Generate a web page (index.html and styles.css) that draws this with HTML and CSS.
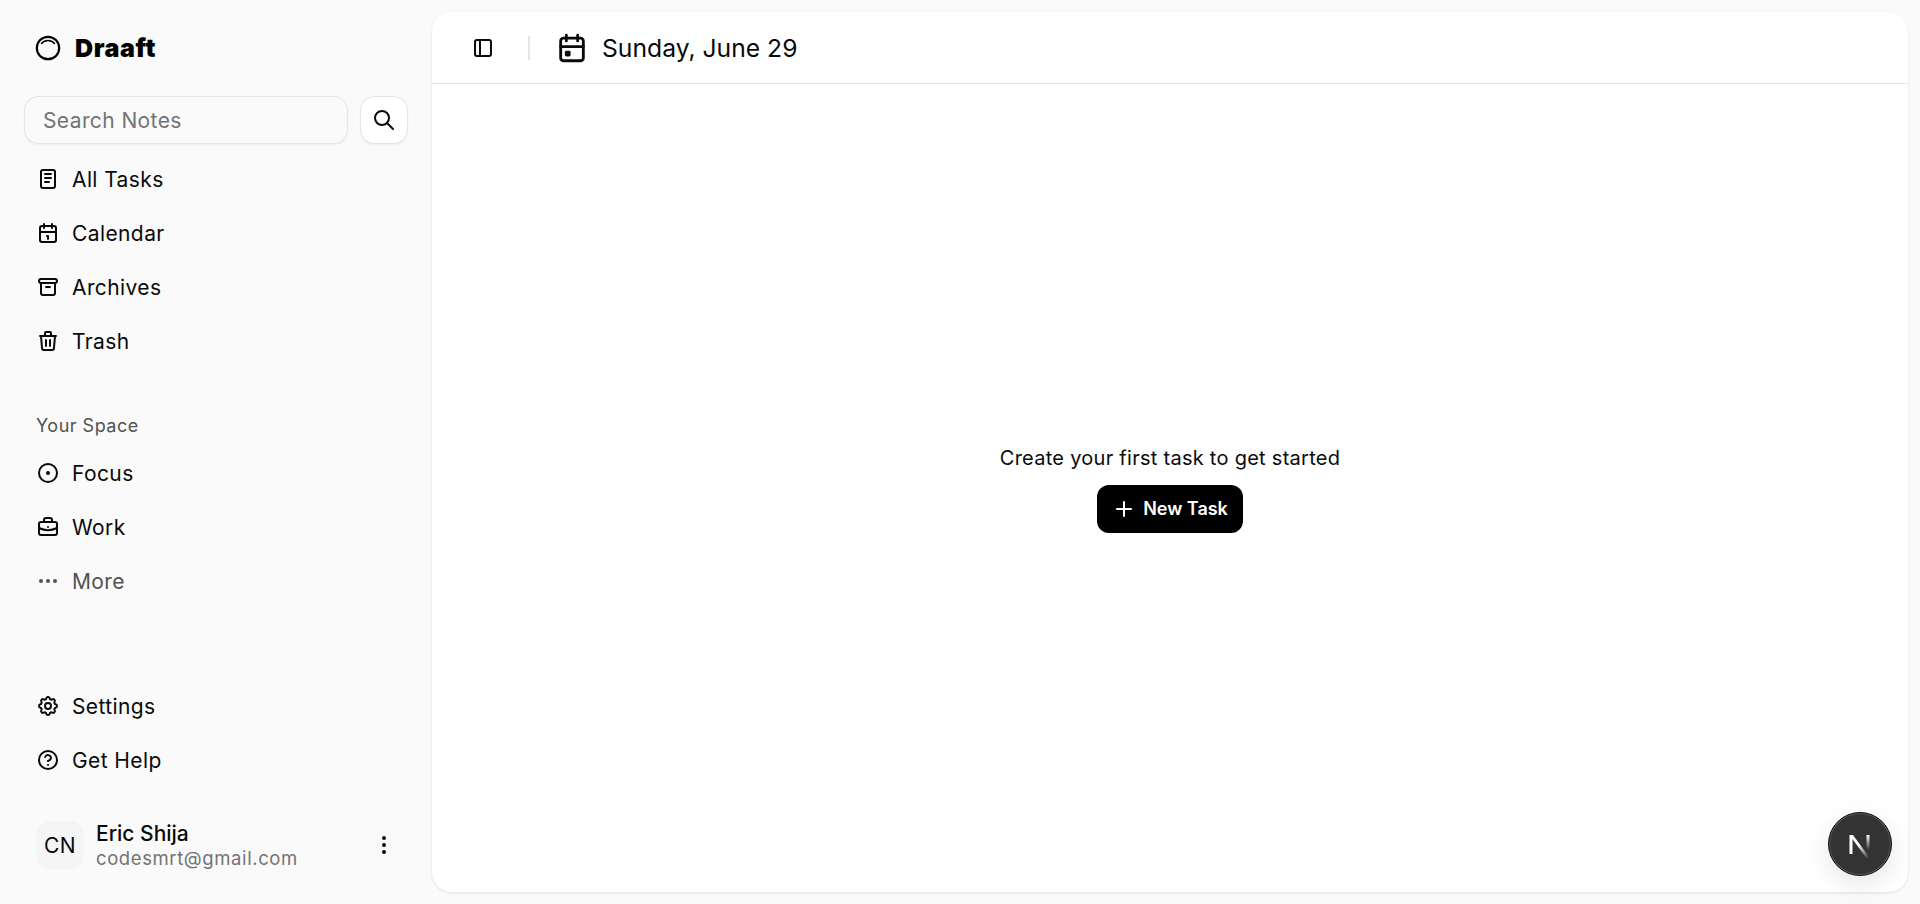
FILE: index.html
```html
<!DOCTYPE html>
<html>
<head>
    <title>Draaft</title>
    <link rel="stylesheet" href="styles.css">
</head>
<body>

    <aside class="sidebar">
        <div class="brand">
            <svg class="brand-logo" width="26" height="26" viewBox="0 0 26 26" fill="none" stroke="currentColor" stroke-linecap="round">
                <circle cx="13" cy="13" r="11.2" stroke-width="2.2"/>
                <path d="M6.5 8.5a8.5 8.5 0 0 1 13 0" stroke-width="1.5"/>
            </svg>
            <span class="brand-name">Draaft</span>
        </div>

        <div class="search">
            <input class="search-input" type="text" placeholder="Search Notes">
            <button class="search-button">
                <svg class="icon" viewBox="0 0 24 24"><circle cx="10" cy="10" r="7"/><path d="M21 21l-6-6"/></svg>
            </button>
        </div>

        <nav class="nav nav-top">
            <a class="nav-item">
                <svg class="icon" viewBox="0 0 24 24"><rect x="5" y="3" width="14" height="18" rx="2"/><path d="M9 7h6M9 11h6M9 15h4"/></svg>
                All Tasks
            </a>
            <a class="nav-item">
                <svg class="icon" viewBox="0 0 24 24"><rect x="4" y="5" width="16" height="16" rx="2"/><path d="M16 3v4M8 3v4M4 11h16M11 15h1v3"/></svg>
                Calendar
            </a>
            <a class="nav-item">
                <svg class="icon" viewBox="0 0 24 24"><rect x="3" y="4" width="18" height="4" rx="2"/><path d="M5 8v10a2 2 0 0 0 2 2h10a2 2 0 0 0 2-2V8M10 12h4"/></svg>
                Archives
            </a>
            <a class="nav-item">
                <svg class="icon" viewBox="0 0 24 24"><path d="M4 7h16M10 11v6M14 11v6M5 7l1 12a2 2 0 0 0 2 2h8a2 2 0 0 0 2-2l1-12M9 7V4a1 1 0 0 1 1-1h4a1 1 0 0 1 1 1v3"/></svg>
                Trash
            </a>
        </nav>

        <div class="nav-label">Your Space</div>

        <nav class="nav">
            <a class="nav-item">
                <svg class="icon" viewBox="0 0 24 24"><circle cx="12" cy="12" r="9"/><circle class="dot" cx="12" cy="12" r="1"/></svg>
                Focus
            </a>
            <a class="nav-item">
                <svg class="icon" viewBox="0 0 24 24"><rect x="3" y="7" width="18" height="13" rx="2"/><path d="M8 7V5a2 2 0 0 1 2-2h4a2 2 0 0 1 2 2v2M12 12v.01M3 13a20 20 0 0 0 18 0"/></svg>
                Work
            </a>
            <a class="nav-item muted">
                <svg class="icon" viewBox="0 0 24 24"><circle class="dot" cx="5" cy="12" r="1"/><circle class="dot" cx="12" cy="12" r="1"/><circle class="dot" cx="19" cy="12" r="1"/></svg>
                More
            </a>
        </nav>

        <nav class="nav nav-bottom">
            <a class="nav-item">
                <svg class="icon" viewBox="0 0 24 24"><path d="M10.325 4.317c.426-1.756 2.924-1.756 3.35 0a1.724 1.724 0 0 0 2.573 1.066c1.543-.94 3.31.826 2.37 2.37a1.724 1.724 0 0 0 1.065 2.572c1.756.426 1.756 2.924 0 3.35a1.724 1.724 0 0 0-1.066 2.573c.94 1.543-.826 3.31-2.37 2.37a1.724 1.724 0 0 0-2.572 1.065c-.426 1.756-2.924 1.756-3.35 0a1.724 1.724 0 0 0-2.573-1.066c-1.543.94-3.31-.826-2.37-2.37a1.724 1.724 0 0 0-1.065-2.572c-1.756-.426-1.756-2.924 0-3.35a1.724 1.724 0 0 0 1.066-2.573c-.94-1.543.826-3.31 2.37-2.37c1 .608 2.296.07 2.572-1.065z"/><circle cx="12" cy="12" r="3"/></svg>
                Settings
            </a>
            <a class="nav-item">
                <svg class="icon" viewBox="0 0 24 24"><circle cx="12" cy="12" r="9"/><path d="M9.1 9a3 3 0 0 1 5.8 1c0 2-3 3-3 3M12 17v.01"/></svg>
                Get Help
            </a>
        </nav>

        <div class="user">
            <div class="avatar">CN</div>
            <div class="user-info">
                <div class="user-name">Eric Shija</div>
                <div class="user-email">codesmrt@gmail.com</div>
            </div>
            <svg class="icon user-menu" viewBox="0 0 24 24"><circle class="dot" cx="12" cy="5" r="1"/><circle class="dot" cx="12" cy="12" r="1"/><circle class="dot" cx="12" cy="19" r="1"/></svg>
        </div>
    </aside>

    <main class="main">
        <header class="topbar">
            <svg class="icon toggle" viewBox="0 0 24 24"><rect x="4" y="4" width="16" height="16" rx="2"/><path d="M9 4v16"/></svg>
            <span class="divider"></span>
            <svg class="icon date-icon" viewBox="0 0 24 24"><rect x="4" y="5" width="16" height="16" rx="2"/><path d="M16 3v4M8 3v4M4 11h16"/><rect class="dot" x="8" y="15" width="2" height="2"/></svg>
            <span class="date">Sunday, June 29</span>
        </header>

        <section class="empty">
            <p class="empty-text">Create your first task to get started</p>
            <button class="new-task">
                <svg class="icon" viewBox="0 0 24 24"><path d="M12 5v14M5 12h14"/></svg>
                New Task
            </button>
        </section>

        <div class="dev-badge">
            <svg width="28" height="28" viewBox="0 0 28 28" fill="none">
                <defs>
                    <linearGradient id="fadeDiag" gradientUnits="userSpaceOnUse" x1="7" y1="8" x2="24" y2="27">
                        <stop offset="0.35" stop-color="#fff"/>
                        <stop offset="1" stop-color="#fff" stop-opacity="0"/>
                    </linearGradient>
                    <linearGradient id="fadeStem" gradientUnits="userSpaceOnUse" x1="0" y1="5" x2="0" y2="20">
                        <stop offset="0" stop-color="#fff"/>
                        <stop offset="1" stop-color="#fff" stop-opacity="0"/>
                    </linearGradient>
                </defs>
                <path d="M3.5 5h3v19h-3z" fill="#fff"/>
                <path d="M3.5 5h3.4l17 23h-3.6z" fill="url(#fadeDiag)"/>
                <path d="M20.5 5h3v15h-3z" fill="url(#fadeStem)"/>
            </svg>
        </div>
    </main>

</body>
</html>
```

FILE: styles.css
```css
* {
    box-sizing: border-box;
}

body {
    margin: 0;
    height: 100vh;
    overflow: hidden;
    display: flex;
    background-color: #fafafa;
    color: #0a0a0a;
    font-family: Inter, "Liberation Sans", sans-serif;
}

.icon {
    width: 24px;
    height: 24px;
    flex-shrink: 0;
    fill: none;
    stroke: currentColor;
    stroke-width: 2;
    stroke-linecap: round;
    stroke-linejoin: round;
}

.icon .dot {
    fill: currentColor;
}

/* sidebar */
.sidebar {
    width: 432px;
    flex-shrink: 0;
    display: flex;
    flex-direction: column;
    padding: 0 24px 35px;
}

.brand {
    height: 96px;
    display: flex;
    align-items: center;
    gap: 14px;
    padding-left: 11px;
}

.brand-logo {
    color: #000;
}

.brand-name {
    font-size: 25px;
    font-weight: 900;
    color: #000;
    letter-spacing: 0.6px;
}

.search {
    display: flex;
    gap: 12px;
}

.search-input {
    width: 324px;
    height: 48px;
    padding: 0 18px;
    font-family: inherit;
    font-size: 21px;
    letter-spacing: 0.4px;
    color: #0a0a0a;
    background-color: #fafafa;
    border: 1px solid #e5e5e5;
    border-radius: 14px;
    box-shadow: 0 1px 2px rgba(0, 0, 0, 0.05);
}

.search-input::placeholder {
    color: #737373;
}

.search-button {
    width: 48px;
    height: 48px;
    display: flex;
    align-items: center;
    justify-content: center;
    padding: 0;
    color: #0a0a0a;
    background-color: #fff;
    border: 1px solid #e5e5e5;
    border-radius: 14px;
    box-shadow: 0 1px 2px rgba(0, 0, 0, 0.05);
}

.nav {
    display: flex;
    flex-direction: column;
}

.nav-top {
    margin-top: 8px;
}

.nav-item {
    height: 54px;
    display: flex;
    align-items: center;
    gap: 12px;
    padding-left: 12px;
    font-size: 21px;
    letter-spacing: 0.4px;
}

.nav-item.muted {
    color: #525252;
}

.nav-label {
    margin-top: 36px;
    padding-left: 12px;
    height: 42px;
    display: flex;
    align-items: center;
    font-size: 18px;
    letter-spacing: 0.5px;
    color: #525252;
}

.nav-bottom {
    margin-top: auto;
    margin-bottom: 34px;
}

.user {
    display: flex;
    align-items: center;
    gap: 12px;
    padding: 0 12px;
}

.avatar {
    width: 48px;
    height: 48px;
    display: flex;
    align-items: center;
    justify-content: center;
    background-color: #f5f5f5;
    border-radius: 14px;
    font-size: 21px;
    letter-spacing: 0.5px;
}

.user-info {
    flex: 1;
}

.user-name {
    font-size: 21px;
    font-weight: 500;
    line-height: 26px;
}

.user-email {
    font-size: 18.5px;
    letter-spacing: 0.6px;
    line-height: 22px;
    color: #737373;
}

/* main panel */
.main {
    position: relative;
    flex: 1;
    margin: 12px 12px 12px 0;
    display: flex;
    flex-direction: column;
    background-color: #fff;
    border-radius: 20px;
    box-shadow: 0 1px 3px rgba(0, 0, 0, 0.1);
}

.topbar {
    height: 72px;
    display: flex;
    align-items: center;
    padding-left: 39px;
    border-bottom: 1px solid #e5e5e5;
}

.divider {
    width: 2px;
    height: 24px;
    margin: 0 25px 0 33px;
    background-color: #e5e5e5;
}

.date-icon {
    width: 34px;
    height: 34px;
}

.date {
    margin-left: 13px;
    font-size: 24.7px;
}

.empty {
    flex: 1;
    display: flex;
    flex-direction: column;
    align-items: center;
    justify-content: center;
}

.empty-text {
    margin: 0 0 13px;
    font-size: 20px;
    letter-spacing: 0.27px;
    line-height: 28px;
}

.new-task {
    height: 48px;
    width: 146px;
    display: flex;
    align-items: center;
    justify-content: center;
    gap: 7px;
    padding: 0;
    color: #fff;
    background-color: #000;
    border: none;
    border-radius: 12px;
    font-family: inherit;
    font-size: 18px;
    font-weight: 600;
}

.dev-badge {
    position: absolute;
    right: 16px;
    bottom: 16px;
    width: 64px;
    height: 64px;
    display: flex;
    align-items: center;
    justify-content: center;
    background-color: #333;
    border: 1px solid #111;
    border-radius: 50%;
    box-shadow: inset 0 0 0 1px rgba(255, 255, 255, 0.2), 0 8px 24px rgba(0, 0, 0, 0.1);
}
```
